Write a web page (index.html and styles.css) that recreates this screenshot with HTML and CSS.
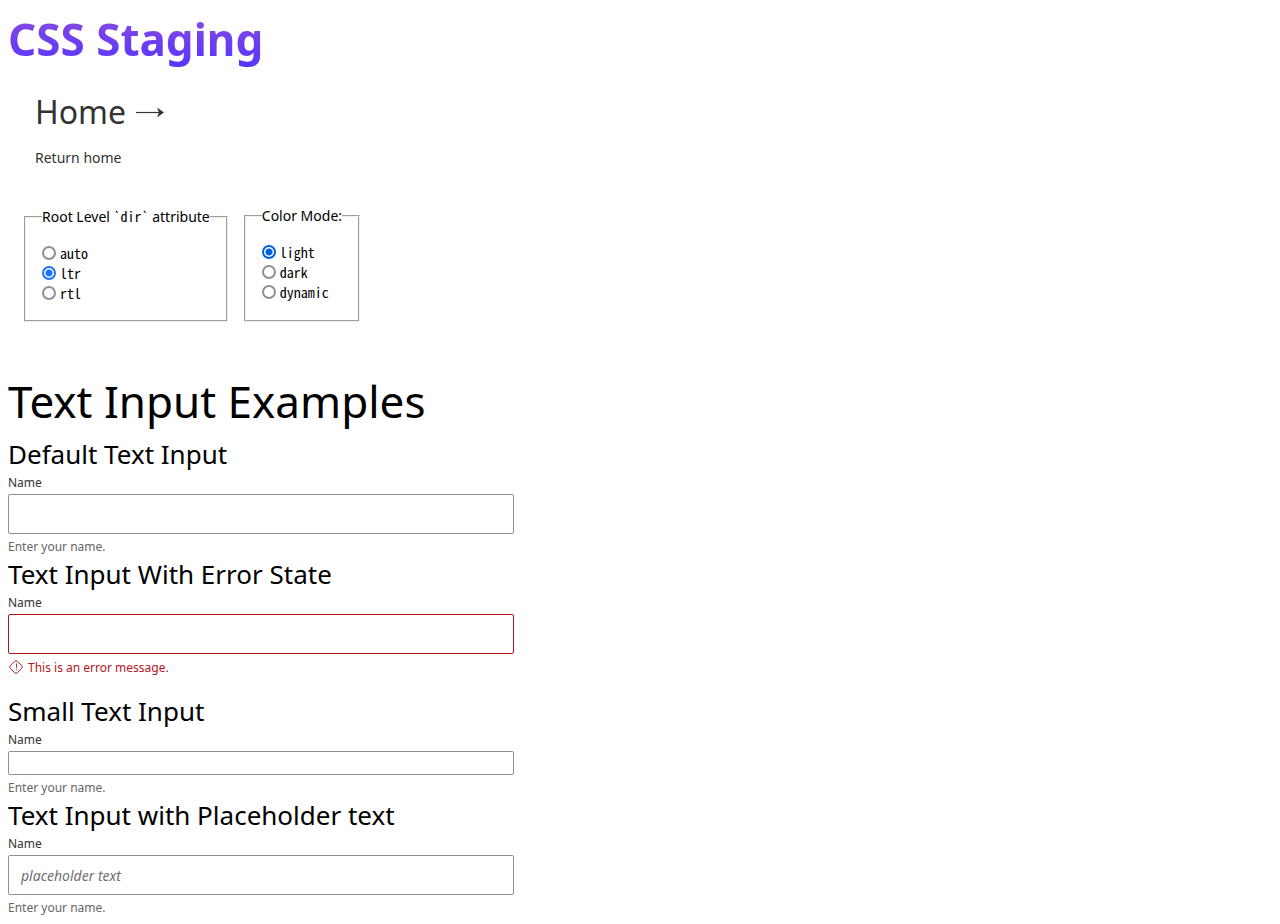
FILE: index.html
```html
<!DOCTYPE html>
<html lang="en" dir="ltr">
<head>
<meta charset="utf-8">
<title>CSS Staging</title>
<link rel="stylesheet" href="styles.css">
</head>
<body>
<header>
  <h1 class="site-title">CSS Staging</h1>
  <a class="card" href="#home">
    <span class="card-title">Home
      <svg class="arrow" viewBox="0 0 28 12" aria-hidden="true"><path d="M0 6.500H26" fill="none" stroke="currentColor" stroke-width="1.2"/><path d="M21 1.500L28 6.500L21 11.500L23 6.500Z" fill="currentColor"/></svg>
    </span>
    <span class="card-text">Return home</span>
  </a>
  <form class="settings">
    <fieldset class="group">
      <legend>Root Level <code>`dir`</code> attribute</legend>
      <label class="option"><input class="dir-radio" type="radio" name="dir" value="auto"><code>auto</code></label>
      <label class="option"><input class="dir-radio" type="radio" name="dir" value="ltr" checked><code>ltr</code></label>
      <label class="option"><input class="dir-radio" type="radio" name="dir" value="rtl"><code>rtl</code></label>
    </fieldset>
    <fieldset class="group">
      <legend>Color Mode:</legend>
      <label class="option"><input type="radio" name="mode" value="light" checked><code>light</code></label>
      <label class="option"><input type="radio" name="mode" value="dark"><code>dark</code></label>
      <label class="option"><input type="radio" name="mode" value="dynamic"><code>dynamic</code></label>
    </fieldset>
  </form>
</header>
<main>
  <h2 class="page-title">Text Input Examples</h2>
  <section class="example">
    <h3>Default Text Input</h3>
    <label for="name-default">Name</label>
    <input class="field" id="name-default" type="text">
    <p class="caption">Enter your name.</p>
  </section>
  <section class="example example-error">
    <h3>Text Input With Error State</h3>
    <label for="name-error">Name</label>
    <input class="field field-error" id="name-error" type="text" aria-invalid="true" aria-describedby="error">
    <p class="error" id="error">
      <svg class="error-icon" viewBox="0 0 16 16" aria-hidden="true"><rect x="3" y="3" width="10" height="10" rx="2" transform="rotate(45 8 8)" fill="none" stroke="currentColor" stroke-width="0.900"/><path d="M8.500 4.500V9M8.500 10.200V11.200" stroke="currentColor" stroke-width="0.900"/></svg>
      This is an error message.
    </p>
  </section>
  <section class="example">
    <h3>Small Text Input</h3>
    <label for="name-small">Name</label>
    <input class="field field-small" id="name-small" type="text">
    <p class="caption">Enter your name.</p>
  </section>
  <section class="example">
    <h3>Text Input with Placeholder text</h3>
    <label for="name-placeholder">Name</label>
    <input class="field" id="name-placeholder" type="text" placeholder="placeholder text">
    <p class="caption">Enter your name.</p>
  </section>
</main>
</body>
</html>
```
FILE: styles.css
```css
* { box-sizing: border-box; }
body {
  margin: 8px;
  font: 14px/20px "Noto Sans", sans-serif;
  color: #000;
  background: #fff;
}
h1, h2, h3, p { margin: 0; }
.site-title {
  width: fit-content;
  font-size: 44px;
  line-height: 62px;
  font-weight: 700;
  color: transparent;
  background: linear-gradient(#8f4ddc, #5333ff);
  background-clip: text;
}
.card {
  display: flex;
  flex-direction: column;
  gap: 12px;
  width: fit-content;
  padding: 18px 27px 16px;
  color: #333;
  text-decoration: none;
}
.card-title {
  display: flex;
  align-items: center;
  gap: 10px;
  font-size: 32px;
  line-height: 48px;
}
.arrow { width: 28px; height: 12px; }
.settings {
  display: flex;
  gap: 16px;
  padding: 22px 16px 0;
}
.group {
  margin: 0;
  padding: 16px 16px 17px;
  border: 2px groove #f0f0f0;
}
.group legend { padding: 0; }
code { font-family: "Noto Sans Mono CJK SC", "Noto Sans Mono CJK JP", monospace; font-size: 14px; }
.option { display: flex; align-items: center; gap: 4px; }
.option input {
  appearance: none;
  width: 14px;
  height: 14px;
  margin: 0;
  border: 2px solid #8f8f9d;
  border-radius: 50%;
  background: #fff;
}
.option input:checked {
  border-color: #0060df;
  background: radial-gradient(circle, #0060df 3px, #fff 4px);
}
.option .dir-radio:checked {
  border-color: #1a73ff;
  background: radial-gradient(circle, #1a73ff 3px, #fff 4px);
}
.page-title {
  margin: 47px 0 2px;
  font-size: 44px;
  line-height: 64px;
  font-weight: 400;
}
.example { display: flex; flex-direction: column; max-width: 506px; }
.example h3 { font-size: 26px; line-height: 38px; font-weight: 400; }
.example label { font-size: 12px; line-height: 20px; color: #333; }
.field {
  height: 40px;
  margin: 1px 0 5px;
  padding: 0 12px;
  border: 1px solid #8f8f8f;
  border-radius: 2px;
  font: inherit;
}
.field::placeholder { color: #6f6f6f; font-style: italic; }
.field-small { height: 24px; }
.field-error { border-color: #b3141d; }
.caption { font-size: 12px; line-height: 16px; color: #666; }
.error {
  display: flex;
  align-items: flex-start;
  gap: 4px;
  font-size: 12px;
  line-height: 18px;
  color: #b3141d;
}
.error-icon { width: 16px; height: 16px; }
.example-error { margin-bottom: 15px; }
```
